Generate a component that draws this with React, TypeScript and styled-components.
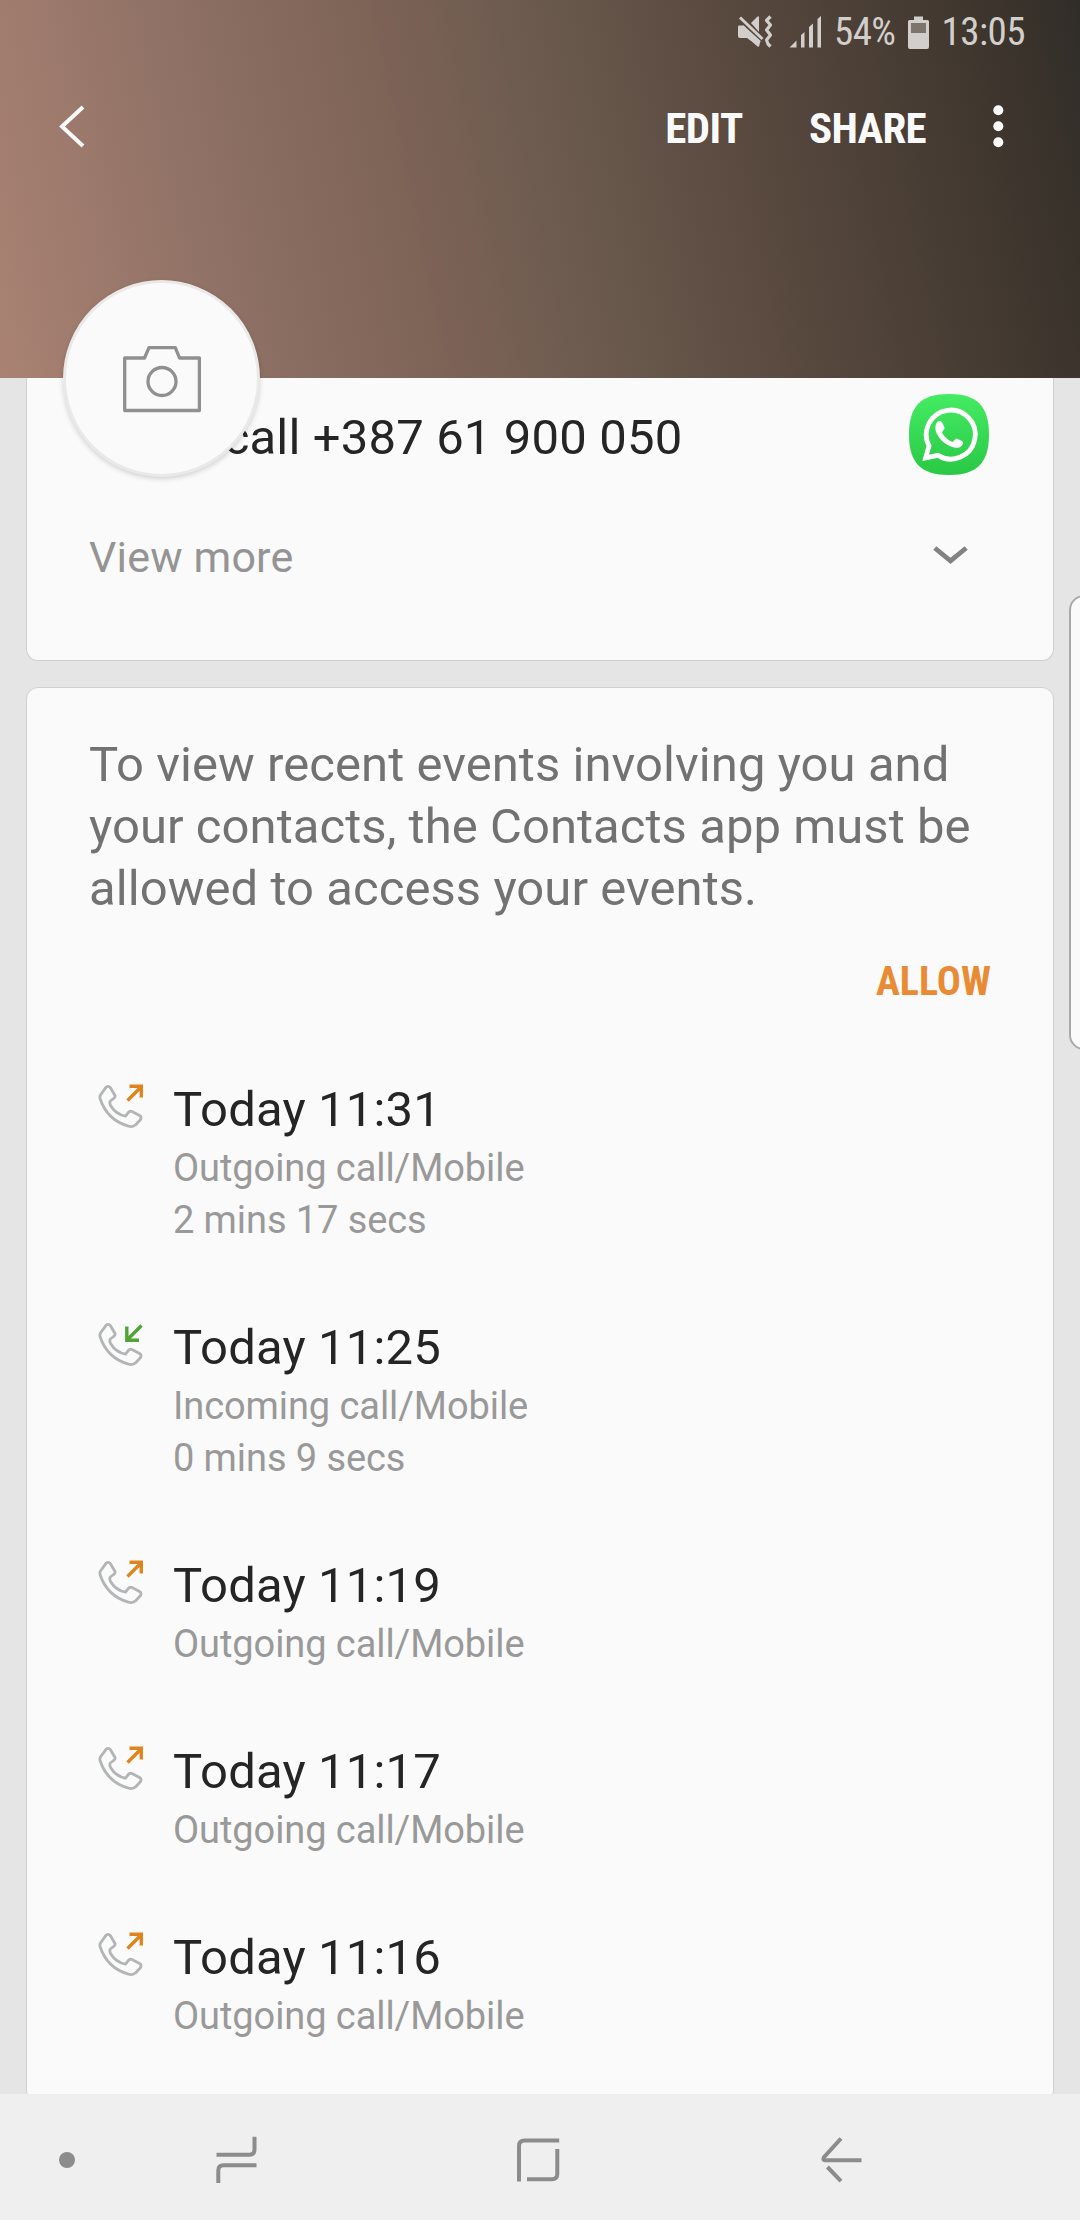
import React from "react";
import styled, { createGlobalStyle } from "styled-components";

const Global = createGlobalStyle`
  * { box-sizing: border-box; }
  body { margin: 0; background: #e5e5e5; font-family: Roboto, "Liberation Sans", sans-serif; }
`;

const Screen = styled.div`
  position: relative;
  width: 1080px;
  height: 2220px;
  display: flex;
  flex-direction: column;
  overflow: hidden;
  background: #e5e5e5;
`;

const Header = styled.header`
  position: relative;
  z-index: 2;
  flex: none;
  height: 378px;
  background: linear-gradient(78deg, #a98273 0%, #8f7165 21%, #7e6357 38%, #6d5b4f 51%, #5b4b40 67%, #483d34 83%, #39322b 95%, #302d29 100%);
`;

const StatusBar = styled.div`
  height: 64px;
  display: flex;
  justify-content: flex-end;
  align-items: center;
  padding-right: 55px;
  color: #d2cecb;
`;

const Condensed = styled.span<{ $size: number; $weight?: number; $tracking?: number }>`
  font-family: "Roboto Condensed", Roboto, sans-serif;
  font-stretch: 75%;
  font-size: ${(p) => p.$size}px;
  font-weight: ${(p) => p.$weight ?? 400};
  letter-spacing: ${(p) => p.$tracking ?? 0}px;
  white-space: nowrap;
`;

const Toolbar = styled.div`
  height: 128px;
  display: flex;
  align-items: center;
  padding: 0 76px 0 56px;
  color: #fafafa;

  svg {
    margin-bottom: 4px;
  }
`;

const Actions = styled.div`
  margin-left: auto;
  display: flex;
  align-items: center;
  gap: 66px;
`;

const Avatar = styled.div`
  position: absolute;
  left: 63px;
  top: 280px;
  width: 197px;
  height: 197px;
  border-radius: 50%;
  border: 3px solid #ebe9e8;
  background: #fafafa;
  box-shadow: 0 2px 5px rgba(0, 0, 0, 0.16);
  display: flex;
  align-items: center;
  justify-content: center;
`;

const Content = styled.main`
  flex: 1;
  min-height: 0;
  overflow: hidden;
  padding: 0 26px;
`;

const Card = styled.section<{ $clipped?: boolean }>`
  background: #fafafa;
  border: 1px solid #d0d0d0;
  border-radius: 12px;
  padding: 46px 62px 60px;
  ${(p) =>
    p.$clipped &&
    `border-top: 0; border-radius: 0 0 12px 12px; height: 283px; padding: 0 64px 0 62px; margin-bottom: 26px;`}
`;

const CardRow = styled.div<{ $height: number; $inset?: number }>`
  height: ${(p) => p.$height}px;
  padding-right: ${(p) => p.$inset ?? 0}px;
  display: flex;
  align-items: center;
  justify-content: space-between;
`;

const CallText = styled.span`
  font-size: 49px;
  letter-spacing: 0.16px;
  padding-top: 5px;
  color: #252525;
`;

const MoreText = styled.span`
  font-size: 43px;
  letter-spacing: 0.18px;
  padding-top: 2px;
  color: #949494;
`;

const Notice = styled.p`
  margin: 0;
  font-size: 49px;
  line-height: 62px;
  letter-spacing: 0.06px;
  color: #727272;
`;

const AllowRow = styled.div`
  height: 60px;
  margin: 31px 0 66px;
  display: flex;
  align-items: center;
  justify-content: flex-end;
  color: #e98b35;
`;

const Log = styled.div`
  display: flex;
  flex-direction: column;
  gap: 69px;
`;

const Entry = styled.div`
  display: grid;
  grid-template-columns: 84px 1fr;
`;

const IconCell = styled.div`
  padding: 5px 0 0 8px;
`;

const Title = styled.div`
  font-size: 49px;
  line-height: 65px;
  letter-spacing: 0.16px;
  color: #252525;
`;

const Detail = styled.div`
  font-size: 38px;
  line-height: 52px;
  letter-spacing: -0.08px;
  color: #999;
`;

const NavBar = styled.nav`
  flex: none;
  height: 126px;
  background: #efefef;
  display: flex;
  align-items: center;
  padding: 6px 0 0 59px;
`;

const NavItem = styled.div<{ $gap: number }>`
  display: flex;
  margin-left: ${(p) => p.$gap}px;
`;

const EdgeHandle = styled.div`
  position: absolute;
  z-index: 3;
  left: 1069px;
  top: 595px;
  width: 30px;
  height: 455px;
  border: 2px solid #a9a9a9;
  border-radius: 16px;
  background: #fafafa;
`;

const MuteIcon = () => (
  <svg width="36" height="34" viewBox="738 14 36 34" fill="#d2cecb">
    <path d="M739.500 24.500H744.500L760 41V45.500H758.500L749 37H741Q739 37 739 35V26Z" />
    <path d="M744 24L764 42L761.500 40L760 45.500L748 37Z" />
    <path d="M752 22L758.500 15.500H760V31Z" />
    <path d="M741 16.500L763.500 38" stroke="#d2cecb" strokeWidth="3" />
    <path d="M771.500 15.500L767.500 19.500L771.500 24L767.500 29L771.500 34L767.500 39L769 43L771.500 45.500" fill="none" stroke="#d2cecb" strokeWidth="3.200" strokeLinejoin="round" />
  </svg>
);

const SignalIcon = () => (
  <svg width="32" height="32" viewBox="790 15 32 32" fill="#d2cecb">
    <path d="M790.500 46.500L797.500 39.500V46.500ZM802 46.500V34L805.500 31V46.500ZM810 46.500V26L814 22.500V46.500ZM818.500 46.500V18L822 15V46.500Z" />
  </svg>
);

const BatteryIcon = () => (
  <svg width="21" height="33" viewBox="908 14 21 33">
    <path d="M914 14.500H923V18H927.500Q929 18 929 19.500V45Q929 47 927 47H910Q908 47 908 45V19.500Q908 18 909.500 18H914Z" fill="#d2cecb" />
    <rect x="911" y="21" width="15" height="10" fill="#7d756c" />
  </svg>
);

const StatusGap = styled.span<{ $w: number }>`
  flex: none;
  width: ${(p) => p.$w}px;
`;

const BackChevron = () => (
  <svg width="32" height="44" viewBox="56 104 32 44" fill="none" stroke="#fafafa" strokeWidth="4">
    <path d="M83 107L62 126.500L83 146" />
  </svg>
);

const MoreDots = () => (
  <svg width="12" height="44" viewBox="992 103 12 44" fill="#fafafa">
    <circle cx="998.300" cy="109.300" r="5" />
    <circle cx="998.300" cy="125.300" r="5" />
    <circle cx="998.300" cy="141.300" r="5" />
  </svg>
);

const CameraIcon = () => (
  <svg width="80" height="68" viewBox="122 345 80 68" fill="none" stroke="#909090" strokeWidth="3.300" strokeLinejoin="round">
    <path d="M124.700 358H144.500L149 347.600H175.300L179.500 358H199.400V410.500H124.700Z" />
    <circle cx="162" cy="381.500" r="14" />
  </svg>
);

const WhatsAppIcon = () => (
  <svg width="80" height="81" viewBox="0 0 80 81">
    <defs>
      <linearGradient id="wa" x1="0" y1="0" x2="0" y2="1">
        <stop offset="0" stopColor="#45eb63" />
        <stop offset="1" stopColor="#29c845" />
      </linearGradient>
    </defs>
    <path d="M40 0C68 0 80 12 80 40.500C80 69 68 81 40 81C12 81 0 69 0 40.500C0 12 12 0 40 0Z" fill="url(#wa)" />
    <path d="M16.700 63.900L20 51.800A24.500 24.500 0 1 1 28.900 61.400Z" fill="none" stroke="#fff" strokeWidth="4.800" />
    <path d="M28.500 27.700C30 26.500 32.500 26.800 33.300 28.600L35.500 33.800C36 35 33.500 37.200 33 38.300C34.500 42.500 39.500 46.500 43.500 48C44.800 47.500 46.500 44.200 48 44.500L53.200 47.200C54.600 48 54 50.500 52.800 51.700C50 54.500 46 54.200 42.500 52.800C35 50 29.500 44 27.300 38.500C26 35 26 30.200 28.500 27.700Z" fill="#fff" />
  </svg>
);

const DownChevron = () => (
  <svg width="36" height="22" viewBox="933 545 36 22" fill="none" stroke="#828282" strokeWidth="4.800">
    <path d="M934.800 548L950.500 560.800L966.200 548" />
  </svg>
);

const CallIcon = ({ incoming }: { incoming?: boolean }) => (
  <svg width="48" height="48" viewBox="0 0 48 48" fill="none">
    <path
      d="M3.800 12.500L9 5.400Q11.500 3.200 13.300 5.500L18 13.500Q18.500 15.200 16.600 16.500L13.300 19Q12.200 20.500 13.500 23.500Q19 32.500 28.500 34.200L31.500 30.300Q33 28.600 35 29.600L42.500 33.500Q45.200 35.300 43.300 37.800L38.700 42.800Q36 45.300 31.500 44.200Q10 38 3 16.500Q2.500 14 3.800 12.500Z"
      stroke="#b2b4b5"
      strokeWidth="2.800"
      strokeLinejoin="round"
    />
    {incoming ? (
      <path d="M44.500 5.500L30.500 19.500M29.800 6.500V20.200H42" stroke="#50a436" strokeWidth="3.400" />
    ) : (
      <path d="M30.500 18.500L44 5M32.500 4.200H44.300V15.500" stroke="#e0841e" strokeWidth="3.400" />
    )}
  </svg>
);

const strokeProps = { fill: "none", stroke: "#8c8c8c", strokeWidth: 4 };

const RecentsIcon = () => (
  <svg width="42" height="48" viewBox="216 2136 42 48" {...strokeProps}>
    <path d="M254.500 2136.700V2149.500Q254.500 2154.700 249.300 2154.700H216.500" />
    <path d="M256.500 2165.300H223.500Q218.300 2165.300 218.300 2170.500V2183" />
  </svg>
);

const HomeIcon = () => (
  <svg width="44" height="46" viewBox="516 2137 44 46" {...strokeProps}>
    <path d="M519 2181.500V2146Q519 2140.400 524.500 2140.400H559.200" />
    <path d="M557.300 2149V2174Q557.300 2179.300 552 2179.300H527" />
  </svg>
);

const ReturnIcon = () => (
  <svg width="42" height="46" viewBox="820 2137 42 46" {...strokeProps}>
    <path d="M841 2138.500L823.800 2157.500Q822.500 2160.200 825 2160.200H861.500" />
    <path d="M827.400 2167L841 2181.200" />
  </svg>
);

interface Call {
  time: string;
  kind: "Outgoing" | "Incoming";
  duration?: string;
}

const calls: Call[] = [
  { time: "11:31", kind: "Outgoing", duration: "2 mins 17 secs" },
  { time: "11:25", kind: "Incoming", duration: "0 mins 9 secs" },
  { time: "11:19", kind: "Outgoing" },
  { time: "11:17", kind: "Outgoing" },
  { time: "11:16", kind: "Outgoing" },
];

export default function App() {
  return (
    <>
      <Global />
      <Screen>
        <Header>
          <StatusBar>
            <MuteIcon />
            <StatusGap $w={16} />
            <SignalIcon />
            <StatusGap $w={13} />
            <Condensed $size={39} $tracking={-0.6}>54%</Condensed>
            <StatusGap $w={13} />
            <BatteryIcon />
            <StatusGap $w={12} />
            <Condensed $size={39} $tracking={-0.5}>13:05</Condensed>
          </StatusBar>
          <Toolbar>
            <BackChevron />
            <Actions>
              <Condensed $size={43} $weight={700} $tracking={-0.5}>EDIT</Condensed>
              <Condensed $size={43} $weight={700} $tracking={-0.7}>SHARE</Condensed>
              <MoreDots />
            </Actions>
          </Toolbar>
          <Avatar>
            <CameraIcon />
          </Avatar>
        </Header>
        <Content>
          <Card $clipped>
            <CardRow $height={113}>
              <CallText>Voice call +387 61 900 050</CallText>
              <WhatsAppIcon />
            </CardRow>
            <CardRow $height={130} $inset={20}>
              <MoreText>View more</MoreText>
              <DownChevron />
            </CardRow>
          </Card>
          <Card>
            <Notice>
              To view recent events involving you and
              <br />
              your contacts, the Contacts app must be
              <br />
              allowed to access your events.
            </Notice>
            <AllowRow>
              <Condensed $size={40} $weight={700}>ALLOW</Condensed>
            </AllowRow>
            <Log>
              {calls.map((c) => (
                <Entry key={c.time}>
                  <IconCell>
                    <CallIcon incoming={c.kind === "Incoming"} />
                  </IconCell>
                  <div>
                    <Title>Today {c.time}</Title>
                    <Detail>{c.kind} call/Mobile</Detail>
                    {c.duration && <Detail>{c.duration}</Detail>}
                  </div>
                </Entry>
              ))}
            </Log>
          </Card>
        </Content>
        <NavBar>
          <svg width="16" height="16" viewBox="0 0 16 16" fill="#8c8c8c">
            <circle cx="8" cy="8" r="8" />
          </svg>
          <NavItem $gap={141}><RecentsIcon /></NavItem>
          <NavItem $gap={258}><HomeIcon /></NavItem>
          <NavItem $gap={260}><ReturnIcon /></NavItem>
        </NavBar>
        <EdgeHandle />
      </Screen>
    </>
  );
}
